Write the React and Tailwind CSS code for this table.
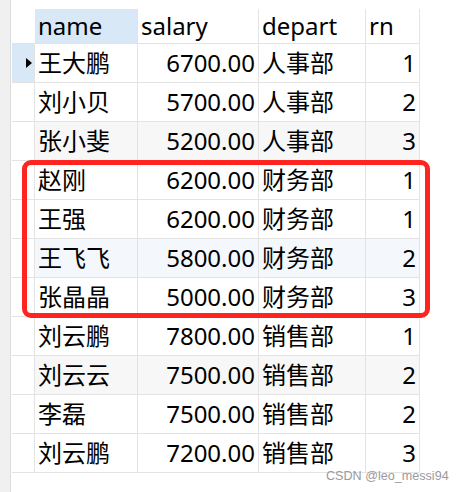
const ROWS = [
  { name: "王大鹏", salary: "6700.00", depart: "人事部", rn: 1, selected: true },
  { name: "刘小贝", salary: "5700.00", depart: "人事部", rn: 2 },
  { name: "张小斐", salary: "5200.00", depart: "人事部", rn: 3, bg: "bg-[#f7f7f7]" },
  { name: "赵刚", salary: "6200.00", depart: "财务部", rn: 1 },
  { name: "王强", salary: "6200.00", depart: "财务部", rn: 1 },
  { name: "王飞飞", salary: "5800.00", depart: "财务部", rn: 2, bg: "bg-[#f4f8fc]" },
  { name: "张晶晶", salary: "5000.00", depart: "财务部", rn: 3 },
  { name: "刘云鹏", salary: "7800.00", depart: "销售部", rn: 1 },
  { name: "刘云云", salary: "7500.00", depart: "销售部", rn: 2, bg: "bg-[#f7f7f7]" },
  { name: "李磊", salary: "7500.00", depart: "销售部", rn: 2 },
  { name: "刘云鹏", salary: "7200.00", depart: "销售部", rn: 3 },
];

// shared cell borders
const cell = "flex items-center border-r border-b border-[#e3e3e3]";

export default function App() {
  return (
    <div
      className="relative flex h-[492px] w-[464px] overflow-hidden bg-white text-[24px] leading-none text-black"
      style={{ fontFamily: '"Noto Sans", "Noto Sans CJK SC", sans-serif' }}
    >
      {/* left gutter */}
      <div className="w-[11px] shrink-0 border-r border-[#dcdcdc] bg-[#f0f0f0]" />

      <div className="pt-[9px] pl-[1px]">
        <div className="grid grid-cols-[23px_103px_121px_107px_54px]">
          {/* header */}
          <div className="h-[35px] border-b border-[#e3e3e3]" />
          <div className={`${cell} h-[35px] bg-[#d9e8f6] pl-[3px]`}>name</div>
          <div className={`${cell} h-[35px] pl-[3px]`}>salary</div>
          <div className={`${cell} h-[35px] pl-[3px]`}>depart</div>
          <div className={`${cell} h-[35px] pl-[3px]`}>rn</div>

          {ROWS.map((r, i) => (
            <Row key={i} row={r} />
          ))}
        </div>
      </div>

      {/* red highlight around 财务部 rows */}
      <div className="absolute left-[22px] top-[160px] h-[158px] w-[408px] rounded-[9px] border-[5px] border-[#ff2420]" />

      {/* watermark */}
      <div
        className="absolute left-[326px] top-[469px] text-[12.6px] leading-[14px] text-[#9a9a9a]"
        style={{ fontFamily: '"Liberation Sans", sans-serif' }}
      >
        CSDN @leo_messi94
      </div>
    </div>
  );
}

function Row({ row }) {
  const bg = row.bg || "";
  return (
    <>
      <div
        className={`${cell} h-[39px] justify-end pr-[2px] ${
          row.selected ? "bg-[#d9e8f6]" : ""
        }`}
      >
        {row.selected && (
          <svg width="6" height="10" viewBox="0 0 6 10">
            <path d="M0 0 L6 5 L0 10 Z" fill="#000" />
          </svg>
        )}
      </div>
      <div className={`${cell} h-[39px] pl-[3px] ${bg}`}>{row.name}</div>
      <div className={`${cell} h-[39px] justify-end pr-[3px] ${bg}`}>{row.salary}</div>
      <div className={`${cell} h-[39px] pl-[3px] ${bg}`}>{row.depart}</div>
      <div className={`${cell} h-[39px] justify-end pr-[3px] ${bg}`}>{row.rn}</div>
    </>
  );
}
